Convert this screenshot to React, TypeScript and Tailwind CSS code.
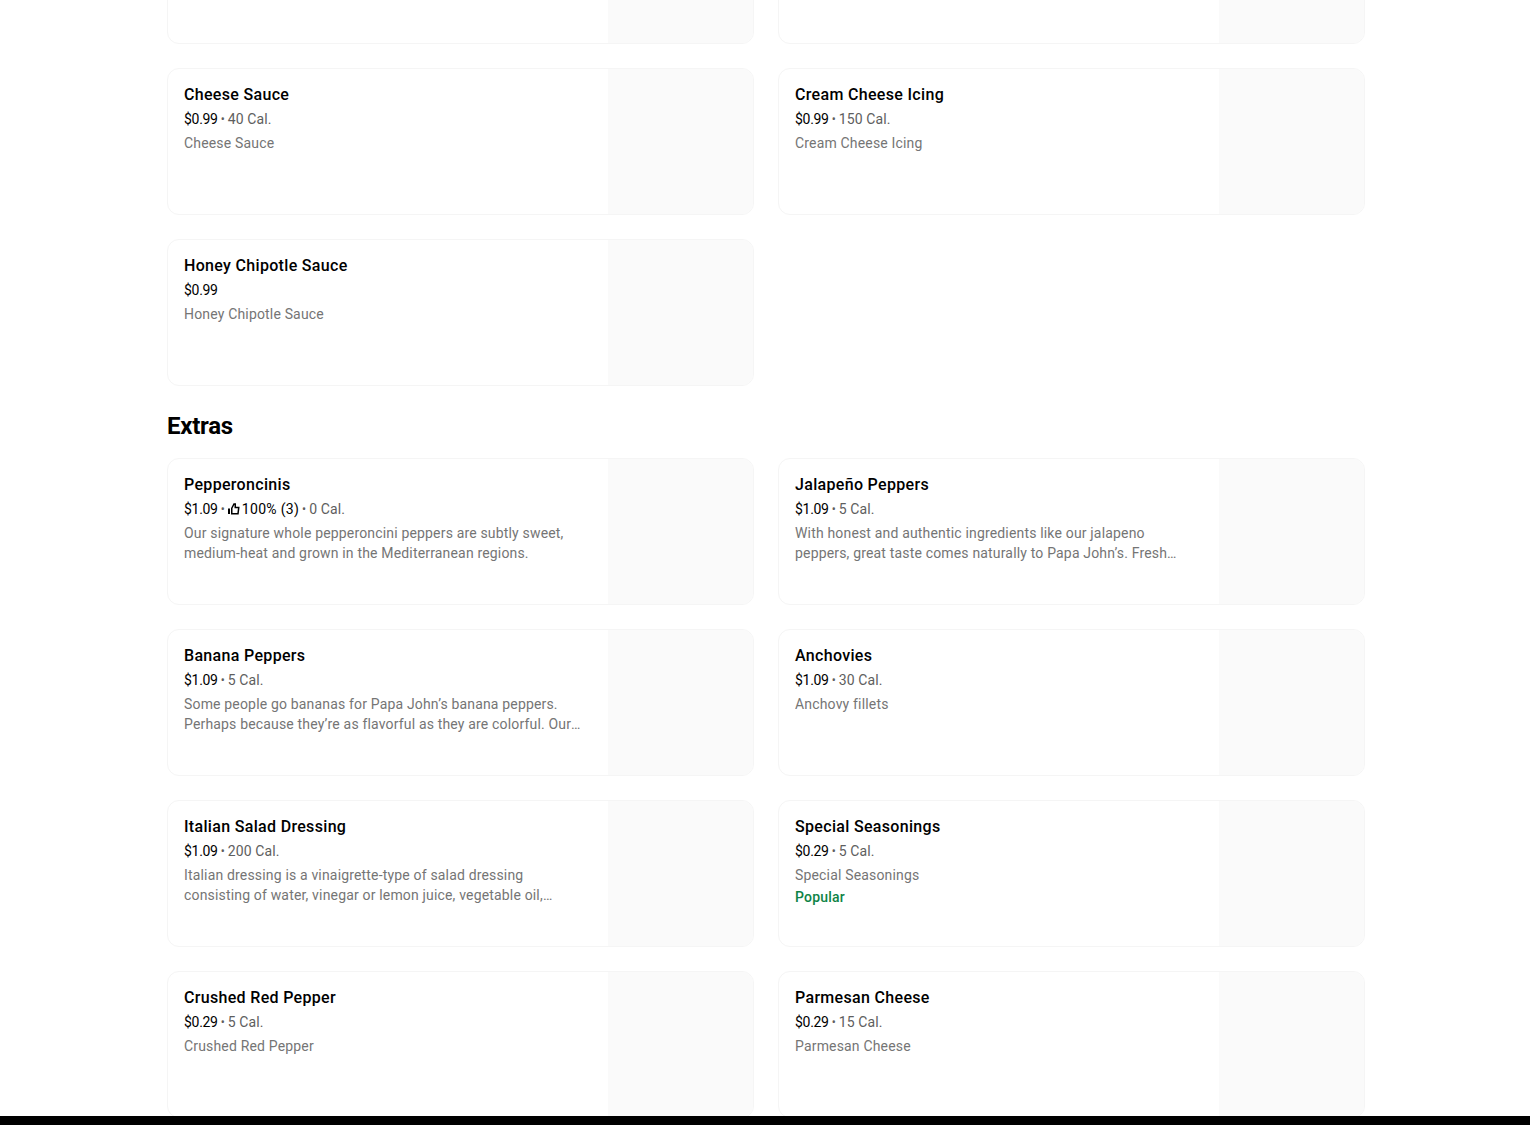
type Item = {
    name: string;
    price: string;
    cal?: string;
    rating?: string;
    desc?: string;
    popular?: boolean;
};

const sauces: Item[] = [
    { name: 'Cheese Sauce', price: '$0.99', cal: '40 Cal.', desc: 'Cheese Sauce' },
    { name: 'Cream Cheese Icing', price: '$0.99', cal: '150 Cal.', desc: 'Cream Cheese Icing' },
    { name: 'Honey Chipotle Sauce', price: '$0.99', desc: 'Honey Chipotle Sauce' },
];

const extras: Item[] = [
    {
        name: 'Pepperoncinis',
        price: '$1.09',
        rating: '100% (3)',
        cal: '0 Cal.',
        desc: 'Our signature whole pepperoncini peppers are subtly sweet, medium-heat and grown in the Mediterranean regions.',
    },
    {
        name: 'Jalapeño Peppers',
        price: '$1.09',
        cal: '5 Cal.',
        desc: 'With honest and authentic ingredients like our jalapeno peppers, great taste comes naturally to Papa John’s. Fresh jalapeno peppers are sliced and added to your order.',
    },
    {
        name: 'Banana Peppers',
        price: '$1.09',
        cal: '5 Cal.',
        desc: 'Some people go bananas for Papa John’s banana peppers. Perhaps because they’re as flavorful as they are colorful. Our banana peppers are mild and tangy on any pizza you like.',
    },
    { name: 'Anchovies', price: '$1.09', cal: '30 Cal.', desc: 'Anchovy fillets' },
    {
        name: 'Italian Salad Dressing',
        price: '$1.09',
        cal: '200 Cal.',
        desc: 'Italian dressing is a vinaigrette-type of salad dressing consisting of water, vinegar or lemon juice, vegetable oil, chopped bell peppers, sugar and a blend of herbs and spices.',
    },
    { name: 'Special Seasonings', price: '$0.29', cal: '5 Cal.', desc: 'Special Seasonings', popular: true },
    { name: 'Crushed Red Pepper', price: '$0.29', cal: '5 Cal.', desc: 'Crushed Red Pepper' },
    { name: 'Parmesan Cheese', price: '$0.29', cal: '15 Cal.', desc: 'Parmesan Cheese' },
];

const ThumbIcon = () => (
    <svg viewBox="0 0 12 12" className="mr-[2px] h-[12px] w-[12px] text-black" fill="none" stroke="currentColor">
        <path d="M1 5.5V11" strokeWidth="2" />
        <path d="M3.75 5.25 6 1h1.25v3.5h3.5L10 10.75H3.75Z" strokeWidth="1.5" strokeLinejoin="miter" />
    </svg>
);

const Card = ({ item }: { item?: Item }) => (
    <div className="flex h-[147px] overflow-hidden rounded-[12px] border border-[#f5f5f5] bg-white">
        <div className="min-w-0 flex-1 pl-4 pr-6 pt-[15px]">
            {item && (
                <>
                    <div className="text-[16px] leading-[22px] font-medium tracking-[0.32px] text-black">{item.name}</div>
                    <div className="mt-[3px] flex h-[20px] items-center text-[14px] leading-[20px] tracking-[0.1px] text-[#5e5e5e]">
                        <span className="tracking-[-0.3px] text-black">{item.price}</span>
                        {item.rating && (
                            <>
                                <span className="mx-[3px] text-[12px]">•</span>
                                <ThumbIcon />
                                <span className="tracking-[0.3px] text-black">{item.rating}</span>
                            </>
                        )}
                        {item.cal && (
                            <>
                                <span className="mx-[3px] text-[12px]">•</span>
                                <span>{item.cal}</span>
                            </>
                        )}
                    </div>
                    <div className="mt-[4px] line-clamp-2 text-[14px] leading-[20px] tracking-[0.17px] text-[#757575]">{item.desc}</div>
                    {item.popular && <div className="mt-[2px] text-[14px] leading-[20px] font-medium tracking-[0.2px] text-[#0e8345]">Popular</div>}
                </>
            )}
        </div>
        <div className="w-[145px] shrink-0 bg-[#fafafa]"></div>
    </div>
);

const App = () => {
    return (
        <div className="flex h-[1125px] flex-col overflow-hidden bg-white font-['Roboto','Liberation_Sans',sans-serif]">
            <main className="min-h-0 flex-1 overflow-hidden pl-[167px] pr-[165px]">
                <div className="-mt-[103px] grid grid-cols-2 gap-6">
                    <Card />
                    <Card />
                    {sauces.map((item) => (
                        <Card key={item.name} item={item} />
                    ))}
                </div>
                <h2 className="mt-[24px] h-[48px] text-[24px] leading-[32px] font-bold tracking-[-0.25px] text-black">Extras</h2>
                <div className="grid grid-cols-2 gap-6">
                    {extras.map((item) => (
                        <Card key={item.name} item={item} />
                    ))}
                </div>
            </main>
            <div className="h-[9px] shrink-0 bg-black"></div>
        </div>
    );
};

export default App;
